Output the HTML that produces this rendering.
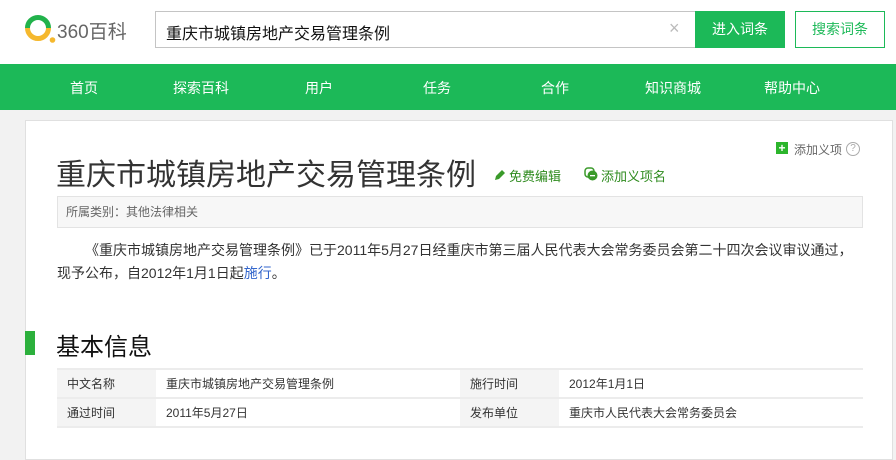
<!DOCTYPE html>
<html><head><meta charset="utf-8"><style>
*{margin:0;padding:0;box-sizing:border-box}
body{width:896px;height:453px;overflow:hidden;background:#f2f2f2;font-family:"Liberation Sans","Noto Sans CJK SC",sans-serif;position:relative;color:#333}
.a{position:absolute}
.hdr{left:0;top:0;width:896px;height:64px;background:#fff}
.nav{left:0;top:64px;width:896px;height:46px;background:#1cb958}
.nav span{position:absolute;top:14px;font-size:14px;color:#fff;transform:translateX(-50%)}
.card{left:25px;top:120px;width:868px;height:340px;background:#fff;border:1px solid #e0e0e0}
table{border-collapse:collapse;font-size:12px;color:#333}
td{height:29px;border-top:2px solid #ececec;border-bottom:2px solid #ececec;padding-left:10px}
td.l{background:#f4f4f4;width:99px}
</style></head><body>
<div class="a hdr"></div>
<svg class="a" style="left:24px;top:14px" width="32" height="30" viewBox="0 0 32 30">
<path d="M3.5 14 A10.5 10.5 0 0 1 24.5 14" stroke="#21b24b" stroke-width="5" fill="none"/>
<path d="M3.5 14 A10.5 10.5 0 0 0 24.5 14" stroke="#f5b82e" stroke-width="5" fill="none"/>
<circle cx="28.5" cy="26" r="2.8" fill="#f5b82e"/></svg>
<div class="a" style="left:57px;top:17px;font-size:19px;color:#666">360百科</div>
<div class="a" style="left:155px;top:11px;width:541px;height:37px;border:1px solid #c4c4c4;background:#fff"></div>
<div class="a" style="left:166px;top:20px;font-size:16px;color:#111">重庆市城镇房地产交易管理条例</div>
<div class="a" style="left:669px;top:18px;font-size:18px;color:#bbb">×</div>
<div class="a" style="left:695px;top:11px;width:90px;height:37px;background:#1cb958;color:#fff;font-size:14px;text-align:center;line-height:37px">进入词条</div>
<div class="a" style="left:795px;top:11px;width:90px;height:37px;border:1px solid #1cb958;background:#fff;color:#1cb958;font-size:14px;text-align:center;line-height:35px">搜索词条</div>
<div class="a nav"><span style="left:84px">首页</span><span style="left:201px">探索百科</span><span style="left:319px">用户</span><span style="left:437px">任务</span><span style="left:555px">合作</span><span style="left:673px">知识商城</span><span style="left:792px">帮助中心</span></div>
<div class="a card"></div>
<div class="a" style="left:776px;top:142px;width:12px;height:12px;background:#2cb52c;color:#fff;font-size:12px;line-height:12px;text-align:center;font-weight:bold">+</div>
<div class="a" style="left:794px;top:141px;font-size:12px;color:#666">添加义项</div>
<div class="a" style="left:846px;top:142px;width:14px;height:14px;border:1px solid #aaa;border-radius:50%;font-size:10px;color:#aaa;text-align:center;line-height:12px">?</div>
<div class="a" style="left:56px;top:150px;font-size:30px;color:#333;white-space:nowrap">重庆市城镇房地产交易管理条例</div>
<svg class="a" style="left:494px;top:168px" width="12" height="13" viewBox="0 0 12 13"><path d="M1 12 L2 8 L8 2 L11 5 L5 11 Z" fill="#3a9a2a"/></svg>
<div class="a" style="left:509px;top:166px;font-size:13px;color:#2e8b1e">免费编辑</div>
<svg class="a" style="left:584px;top:167px" width="14" height="14" viewBox="0 0 14 14"><rect x="1" y="1" width="9" height="9" rx="3" fill="none" stroke="#3a9a2a" stroke-width="1.5"/><circle cx="8.5" cy="8.5" r="5" fill="#3a9a2a"/><rect x="6" y="8" width="5" height="1.3" fill="#fff"/></svg>
<div class="a" style="left:601px;top:166px;font-size:13px;color:#2e8b1e">添加义项名</div>
<div class="a" style="left:57px;top:196px;width:806px;height:32px;background:#f7f7f7;border:1px solid #e3e3e3;font-size:12px;color:#666;line-height:30px;padding-left:8px">所属类别：其他法律相关</div>
<div class="a" style="left:57px;top:239px;width:806px;font-size:14px;line-height:23px;color:#333;text-indent:28px">《重庆市城镇房地产交易管理条例》已于2011年5月27日经重庆市第三届人民代表大会常务委员会第二十四次会议审议通过，现予公布，自2012年1月1日起<span style="color:#3366cc">施行</span>。</div>
<div class="a" style="left:25px;top:331px;width:10px;height:24px;background:#2cb03c"></div>
<div class="a" style="left:56px;top:327px;font-size:24px;color:#111">基本信息</div>
<table class="a" style="left:57px;top:368px;width:806px">
<tr><td class="l">中文名称</td><td style="width:304px">重庆市城镇房地产交易管理条例</td><td class="l">施行时间</td><td>2012年1月1日</td></tr>
<tr><td class="l">通过时间</td><td>2011年5月27日</td><td class="l">发布单位</td><td>重庆市人民代表大会常务委员会</td></tr>
</table>
</body></html>
